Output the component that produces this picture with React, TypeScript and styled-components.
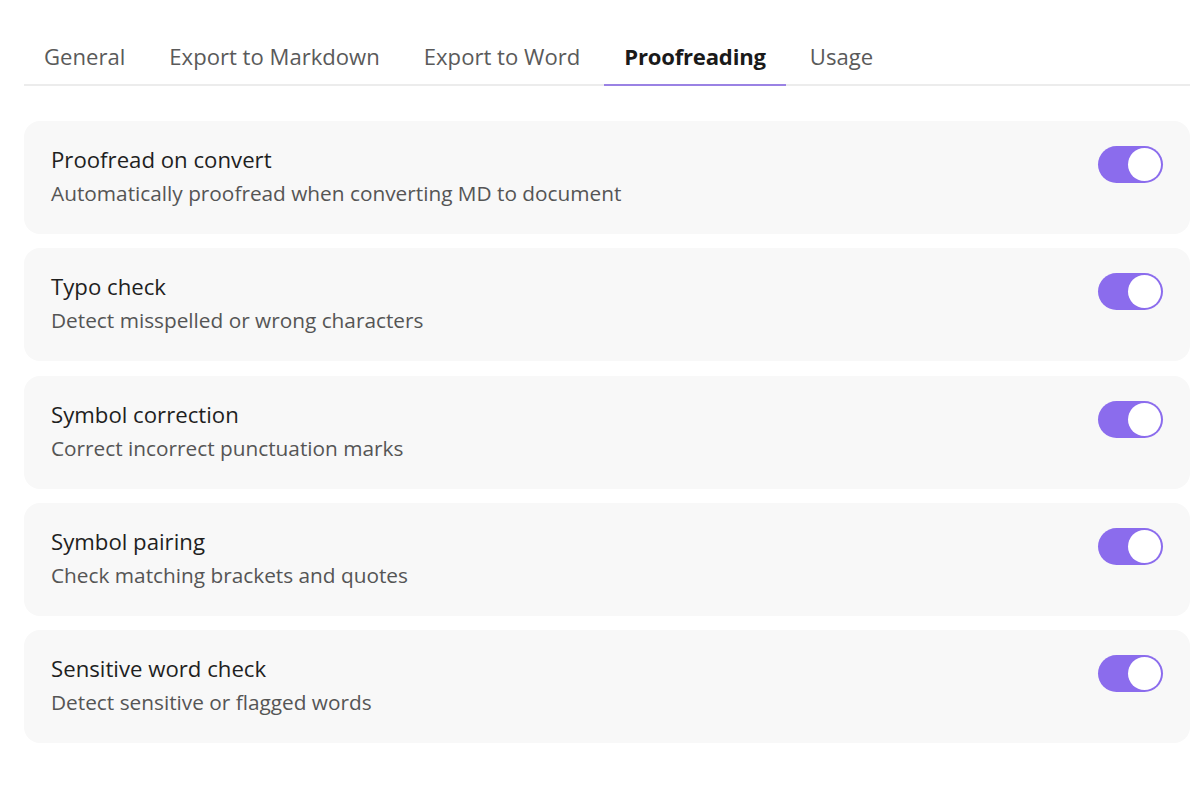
import styled, { createGlobalStyle } from 'styled-components';

const GlobalStyle = createGlobalStyle`
	html, body {
		margin: 0;
		padding: 0;
		background: #ffffff;
		font-family: 'Open Sans', 'Noto Sans', sans-serif;
	}
`;

interface Setting {
	id: string;
	title: string;
	description: string;
	enabled: boolean;
}

const tabs = ['General', 'Export to Markdown', 'Export to Word', 'Proofreading', 'Usage'];
const activeTab = 'Proofreading';

const settings: Setting[] = [
	{
		id: 'convert',
		title: 'Proofread on convert',
		description: 'Automatically proofread when converting MD to document',
		enabled: true,
	},
	{ id: 'typo', title: 'Typo check', description: 'Detect misspelled or wrong characters', enabled: true },
	{
		id: 'symbol',
		title: 'Symbol correction',
		description: 'Correct incorrect punctuation marks',
		enabled: true,
	},
	{ id: 'pairing', title: 'Symbol pairing', description: 'Check matching brackets and quotes', enabled: true },
	{
		id: 'sensitive',
		title: 'Sensitive word check',
		description: 'Detect sensitive or flagged words',
		enabled: true,
	},
];

function App() {
	return (
		<>
			<GlobalStyle />
			<Page>
				<TabBar>
					{tabs.map((tab) => (
						<Tab key={tab} $active={tab === activeTab}>
							{tab}
						</Tab>
					))}
				</TabBar>
				<SettingsList>
					{settings.map((setting) => (
						<SettingCard key={setting.id}>
							<SettingText>
								<SettingTitle>{setting.title}</SettingTitle>
								<SettingDescription>{setting.description}</SettingDescription>
							</SettingText>
							<Toggle $on={setting.enabled} role="switch" aria-checked={setting.enabled}>
								<Knob />
							</Toggle>
						</SettingCard>
					))}
				</SettingsList>
			</Page>
		</>
	);
}

export default App;

const Page = styled.div`
	padding: 33px 10px 0 24px;
`;

const TabBar = styled.div`
	display: flex;
	gap: 4px;
	border-bottom: 2px solid #ececec;
`;

const Tab = styled.div<{ $active?: boolean }>`
	padding: 8px 20px 13px;
	margin-bottom: -2px;
	font-size: 22.1px;
	line-height: 30px;
	color: ${({ $active }) => ($active ? '#1a1a1a' : '#5a5a5a')};
	font-weight: ${({ $active }) => ($active ? 700 : 400)};
	letter-spacing: ${({ $active }) => ($active ? '-0.2px' : '0')};
	border-bottom: 2px solid ${({ $active }) => ($active ? '#9a82e4' : 'transparent')};
`;

const SettingsList = styled.div`
	display: flex;
	flex-direction: column;
	gap: 14.25px;
	margin-top: 35px;
`;

const SettingCard = styled.div`
	display: flex;
	align-items: flex-start;
	justify-content: space-between;
	padding: 25px 27px;
	background: #f8f8f8;
	border-radius: 16px;
	height: 113px;
	box-sizing: border-box;
`;

const SettingText = styled.div`
	display: flex;
	flex-direction: column;
	gap: 6px;
`;

const SettingTitle = styled.div`
	font-size: 22.2px;
	line-height: 27px;
	color: #1f1f1f;
`;

const SettingDescription = styled.div`
	font-size: 20.8px;
	line-height: 28px;
	color: #555555;
`;

const Toggle = styled.div<{ $on: boolean }>`
	display: flex;
	align-items: center;
	justify-content: ${({ $on }) => ($on ? 'flex-end' : 'flex-start')};
	width: 65px;
	height: 37px;
	padding: 2px;
	box-sizing: border-box;
	border-radius: 19px;
	background: ${({ $on }) => ($on ? '#8b6ced' : '#d4d4d8')};
`;

const Knob = styled.div`
	width: 33px;
	height: 33px;
	border-radius: 50%;
	background: #ffffff;
`;
